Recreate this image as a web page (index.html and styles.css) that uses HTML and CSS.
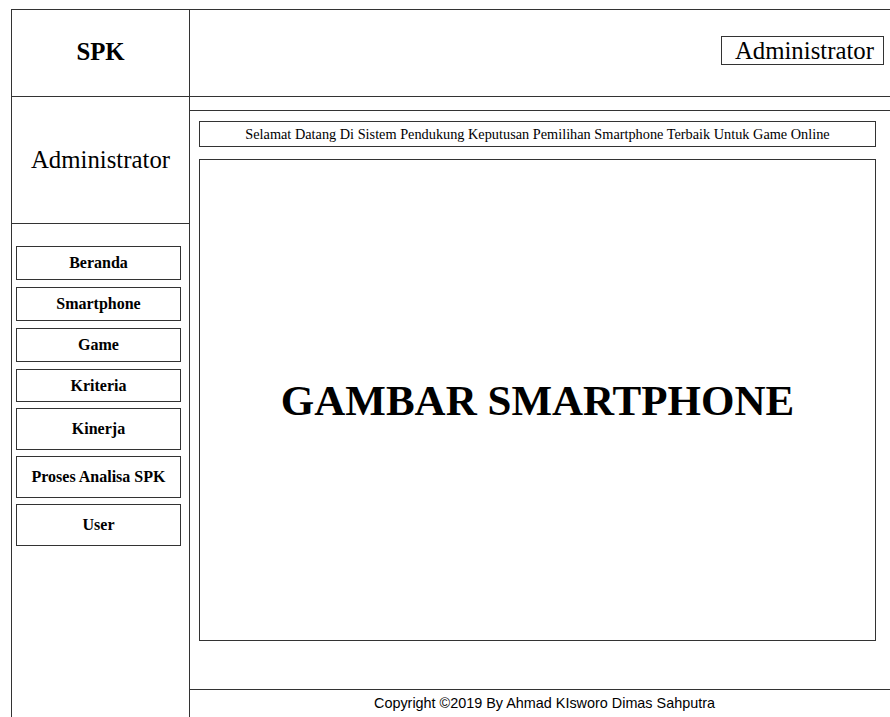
FILE: index.html
```html
<!DOCTYPE html>
<html lang="id">
<head>
<meta charset="utf-8">
<title>SPK - Beranda</title>
<link rel="stylesheet" href="styles.css">
</head>
<body>
<div class="page">
  <aside class="side">
    <div class="brand">SPK</div>
    <div class="role">Administrator</div>
    <nav class="nav">
      <a class="nav-item" href="#">Beranda</a>
      <a class="nav-item" href="#">Smartphone</a>
      <a class="nav-item" href="#">Game</a>
      <a class="nav-item short" href="#">Kriteria</a>
      <a class="nav-item tall" href="#">Kinerja</a>
      <a class="nav-item tall" href="#">Proses Analisa SPK</a>
      <a class="nav-item tall" href="#">User</a>
    </nav>
  </aside>
  <main class="main">
    <header class="topbar">
      <div class="user-box">Administrator</div>
    </header>
    <div class="strip"></div>
    <div class="welcome">Selamat Datang Di Sistem Pendukung Keputusan Pemilihan Smartphone Terbaik Untuk Game Online</div>
    <section class="hero">GAMBAR SMARTPHONE</section>
    <footer class="footer">Copyright ©2019 By Ahmad KIsworo Dimas Sahputra</footer>
  </main>
</div>
</body>
</html>
```

FILE: styles.css
```css
* {
  box-sizing: border-box;
}

html, body {
  margin: 0;
  padding: 0;
  background: #fff;
  overflow: hidden;
}

body {
  font-family: "Liberation Serif", "Times New Roman", serif;
  color: #000;
}

.page {
  display: grid;
  grid-template-columns: 178px 1fr;
  margin: 9px 0 0 11px;
  border-top: 1px solid #333;
  border-left: 1px solid #333;
  min-height: 740px;
}

/* left column */
.side {
  border-right: 1px solid #333;
  display: flex;
  flex-direction: column;
}

.brand {
  height: 87px;
  border-bottom: 1px solid #333;
  display: flex;
  align-items: center;
  justify-content: center;
  font-weight: bold;
  font-size: 24.8px;
  padding-bottom: 2px;
}

.role {
  height: 127px;
  border-bottom: 1px solid #333;
  display: flex;
  align-items: center;
  justify-content: center;
  font-size: 24.8px;
}

.nav {
  display: flex;
  flex-direction: column;
  padding: 15px 8px 0 4px;
}

.nav-item {
  height: 34px;
  margin-top: 7px;
  border: 1px solid #333;
  display: flex;
  align-items: center;
  justify-content: center;
  font-weight: bold;
  font-size: 16px;
  color: #000;
  text-decoration: none;
}

.nav-item.short {
  height: 33px;
}

.nav-item.tall {
  height: 42px;
  margin-top: 6px;
}

/* right column */
.main {
  display: flex;
  flex-direction: column;
}

.topbar {
  height: 87px;
  border-bottom: 1px solid #333;
  display: flex;
  justify-content: flex-end;
  align-items: flex-start;
  padding: 26px 6px 0 0;
}

.user-box {
  height: 29px;
  border: 1px solid #333;
  padding: 0 9px 0 13px;
  font-size: 24.8px;
  line-height: 27px;
}

.strip {
  height: 14px;
  border-bottom: 1px solid #333;
}

.welcome {
  margin: 10px 14px 0 9px;
  height: 26px;
  border: 1px solid #333;
  display: flex;
  align-items: center;
  justify-content: center;
  font-size: 14.3px;
}

.hero {
  margin: 12px 14px 0 9px;
  height: 482px;
  border: 1px solid #333;
  display: flex;
  align-items: center;
  justify-content: center;
  font-weight: bold;
  font-size: 43px;
}

.footer {
  margin-top: 48px;
  border-top: 1px solid #333;
  padding: 5px 0 0 9px;
  text-align: center;
  font-family: "Liberation Sans", Arial, sans-serif;
  font-size: 14.4px;
}
```
